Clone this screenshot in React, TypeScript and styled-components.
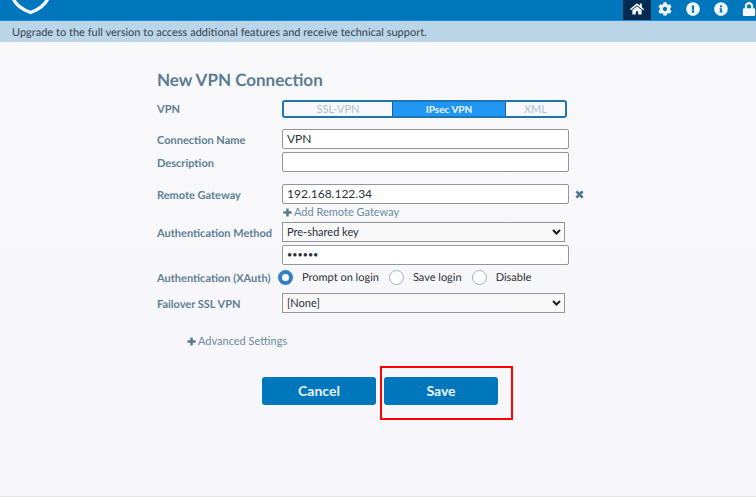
import React from "react";
import styled, { createGlobalStyle, css } from "styled-components";
import { FaHome, FaCog, FaExclamationCircle, FaInfoCircle, FaLock } from "react-icons/fa";

const Global = createGlobalStyle`
  *, *::before, *::after { box-sizing: border-box; }
  body {
    margin: 0;
    min-height: 100vh;
    background: linear-gradient(#f9f9fb, #f6f6fb);
    border-bottom: 1px solid #e4e5ec;
    color: #2b2f36;
    font-family: Lato, sans-serif;
    font-size: 11px;
    line-height: 16px;
    text-rendering: geometricPrecision;
    overflow-x: hidden;
  }
  button, input, select { font: inherit; color: inherit; margin: 0; }
`;

const Header = styled.header`
  display: flex;
  justify-content: space-between;
  height: 21px;
  padding-left: 10px;
  overflow: hidden;
  background: #0076bd;
  border-bottom: 1px solid #2489cc;
`;

const Logo = styled.svg`
  display: block;
  width: 42px;
  height: 16px;
`;

const Nav = styled.nav`
  display: flex;
  margin-right: -7px;
`;

const NavButton = styled.button<{ $active?: boolean }>`
  display: flex;
  justify-content: center;
  align-items: center;
  width: 28px;
  padding: 0 0 2px;
  border: 0;
  font-size: 14px;
  color: #f4f8fc;
  background: ${(p) => (p.$active ? "#032b52" : "transparent")};
`;

const Notice = styled.p`
  margin: 0;
  padding: 4px 12px 1px;
  background: #bad4e8;
  color: #35434f;
`;

const Form = styled.form`
  width: 100%;
  max-width: 442px;
  margin: 0 auto;
  padding-top: 26px;
`;

const Title = styled.h1`
  margin: 0 0 7px;
  color: #5b7c92;
  font-size: 17px;
  line-height: 24px;
  font-weight: 700;
`;

const Row = styled.div<{ $gap?: number }>`
  display: grid;
  grid-template-columns: 125px 1fr;
  align-items: center;
  margin-bottom: ${(p) => p.$gap ?? 3}px;
`;

const labelStyle = css`
  padding-top: 3px;
  color: #5f7f93;
  font-weight: 700;
  white-space: nowrap;
`;
const Label = styled.label`${labelStyle}`;
const LabelText = styled.span`${labelStyle}`;

const Tabs = styled.div`
  display: grid;
  grid-template-columns: 108px 1fr 60px;
  width: 285px;
  height: 18px;
  border: 2px solid #1b76b8;
  border-radius: 3px;
  overflow: hidden;
`;

const Tab = styled.button<{ $active?: boolean }>`
  padding: 0;
  border: 0;
  font-size: ${(p) => (p.$active ? 10 : 11)}px;
  line-height: 14px;
  font-weight: ${(p) => (p.$active ? 700 : 400)};
  color: ${(p) => (p.$active ? "#f2f9ff" : "#a9bfcc")};
  background: ${(p) => (p.$active ? "#2196f3" : "#f8f8fb")};
  & + & { border-left: 1px solid #1d5f91; }
`;

const Line = styled.div`
  display: flex;
  align-items: center;
  gap: 6px;
`;

const Input = styled.input`
  width: 287px;
  height: 20px;
  padding: 0 4px 2px;
  border: 1px solid #969696;
  border-radius: 2px;
  background: #fff;
  font-size: 12px;
  &[type="password"] { font-size: 9px; }
`;

const SelectWrap = styled.div`
  position: relative;
  width: 283px;
`;

const Select = styled.select`
  display: block;
  appearance: none;
  width: 100%;
  height: 20px;
  padding: 0 20px 0 4px;
  border: 1px solid #969696;
  border-radius: 0;
  background: #f8f8f9;
`;

const Chevron = styled.svg`
  position: absolute;
  right: 4px;
  top: 7px;
  width: 9px;
  height: 6px;
  pointer-events: none;
`;

const TextButton = styled.button`
  display: flex;
  align-items: center;
  gap: 2px;
  padding: 0;
  border: 0;
  background: none;
  color: #6d8b9c;
`;

const LinkRow = styled.div`
  display: flex;
  padding-left: 126px;
  margin-bottom: 2px;
`;

const AdvancedRow = styled.div`
  display: flex;
  padding: 20px 0 0 30px;
`;

const Radios = styled.div`
  display: flex;
  align-items: center;
  gap: 10px;
  margin-left: -4px;
`;

const RadioLabel = styled.label`
  display: flex;
  align-items: center;
  gap: 9px;
  white-space: nowrap;
`;

const Radio = styled.input`
  appearance: none;
  width: 15px;
  height: 15px;
  border: 1px solid #9ab0be;
  border-radius: 50%;
  background: #fff;
  &:checked { border: 4px solid #347fc1; }
`;

const Actions = styled.div`
  display: flex;
  justify-content: center;
  gap: 8px;
  padding: 28px 0 0 4px;
`;

const ActionButton = styled.button`
  width: 114px;
  height: 28px;
  padding: 0;
  border: 0;
  border-radius: 3px;
  background: #0076bd;
  color: #eaf4fb;
  font-size: 14px;
  font-weight: 700;
`;

const Highlight = styled.div`
  position: relative;
  &::after {
    content: "";
    position: absolute;
    inset: -11px -15px -15px -4px;
    border: 2px solid #f00;
    pointer-events: none;
  }
`;

const Plus = () => (
  <svg width="9" height="9" viewBox="0 0 9 9" aria-hidden="true">
    <path d="M3.3 0.4h2.4v2.9h2.9v2.4H5.7v2.9H3.3V5.7H.4V3.3h2.9z" fill="#587b90" />
  </svg>
);

const Cross = () => (
  <svg width="9" height="9" viewBox="0 0 9 9" aria-hidden="true">
    <path d="M1.4 1.4l6.2 6.2M7.6 1.4L1.4 7.6" stroke="#4d7590" strokeWidth="2.7" />
  </svg>
);

const Dropdown = ({ id, value }: { id: string; value: string }) => (
  <SelectWrap>
    <Select id={id} defaultValue={value}>
      <option>{value}</option>
    </Select>
    <Chevron viewBox="0 0 9 6">
      <path d="M1 1l3.5 3.5L8 1" fill="none" stroke="#1d1d1f" strokeWidth="2" />
    </Chevron>
  </SelectWrap>
);

export default function App() {
  return (
    <>
      <Global />
      <Header>
        <Logo viewBox="0 0 42 16" aria-hidden="true">
          <path d="M2.500 -3C5 4 12 9.500 20.500 12.500C29 9.500 36 4 38.500 -3" fill="none" stroke="#f6faff" strokeWidth="3.400" />
        </Logo>
        <Nav aria-label="Main">
          <NavButton $active aria-label="Home"><FaHome /></NavButton>
          <NavButton aria-label="Settings"><FaCog /></NavButton>
          <NavButton aria-label="Alerts"><FaExclamationCircle /></NavButton>
          <NavButton aria-label="About"><FaInfoCircle /></NavButton>
          <NavButton aria-label="Lock"><FaLock /></NavButton>
        </Nav>
      </Header>
      <Notice>Upgrade to the full version to access additional features and receive technical support.</Notice>
      <Form onSubmit={(e) => e.preventDefault()}>
        <Title>New VPN Connection</Title>
        <Row $gap={11}>
          <LabelText id="vpn-type">VPN</LabelText>
          <Tabs role="group" aria-labelledby="vpn-type">
            <Tab type="button">SSL-VPN</Tab>
            <Tab type="button" $active>IPsec VPN</Tab>
            <Tab type="button">XML</Tab>
          </Tabs>
        </Row>
        <Row>
          <Label htmlFor="name">Connection Name</Label>
          <Input id="name" defaultValue="VPN" />
        </Row>
        <Row $gap={12}>
          <Label htmlFor="description">Description</Label>
          <Input id="description" />
        </Row>
        <Row $gap={0}>
          <Label htmlFor="gateway">Remote Gateway</Label>
          <Line>
            <Input id="gateway" defaultValue="192.168.122.34" />
            <TextButton type="button" aria-label="Remove gateway"><Cross /></TextButton>
          </Line>
        </Row>
        <LinkRow>
          <TextButton type="button"><Plus />Add Remote Gateway</TextButton>
        </LinkRow>
        <Row>
          <Label htmlFor="method">Authentication Method</Label>
          <Dropdown id="method" value="Pre-shared key" />
        </Row>
        <Row>
          <span />
          <Input type="password" aria-label="Pre-shared key" defaultValue="secret" />
        </Row>
        <Row $gap={6}>
          <LabelText id="xauth">Authentication (XAuth)</LabelText>
          <Radios role="radiogroup" aria-labelledby="xauth">
            <RadioLabel><Radio type="radio" name="xauth" defaultChecked />Prompt on login</RadioLabel>
            <RadioLabel><Radio type="radio" name="xauth" />Save login</RadioLabel>
            <RadioLabel><Radio type="radio" name="xauth" />Disable</RadioLabel>
          </Radios>
        </Row>
        <Row $gap={0}>
          <Label htmlFor="failover">Failover SSL VPN</Label>
          <Dropdown id="failover" value="[None]" />
        </Row>
        <AdvancedRow>
          <TextButton type="button"><Plus />Advanced Settings</TextButton>
        </AdvancedRow>
        <Actions>
          <ActionButton type="button">Cancel</ActionButton>
          <Highlight><ActionButton type="submit">Save</ActionButton></Highlight>
        </Actions>
      </Form>
    </>
  );
}
